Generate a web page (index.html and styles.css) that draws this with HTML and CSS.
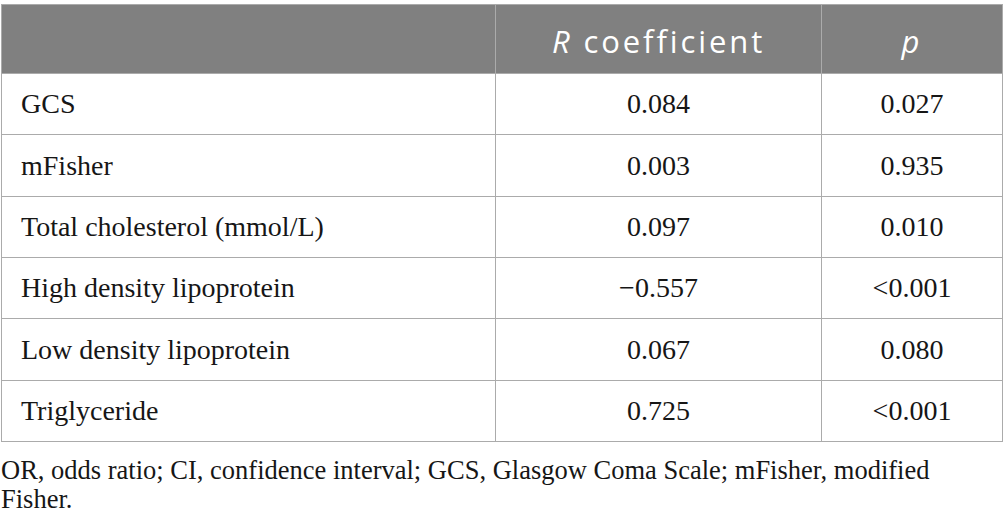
FILE: index.html
```html
<!DOCTYPE html>
<html>
<head>
<meta charset="utf-8">
<link rel="stylesheet" href="styles.css">
</head>
<body>
<div class="wrap">
<table class="data">
  <colgroup><col class="c1"><col class="c2"><col class="c3"></colgroup>
  <thead>
    <tr><th></th><th><i>R</i> coefficient</th><th><i>p</i></th></tr>
  </thead>
  <tbody>
    <tr><td>GCS</td><td>0.084</td><td>0.027</td></tr>
    <tr><td>mFisher</td><td>0.003</td><td>0.935</td></tr>
    <tr><td>Total cholesterol (mmol/L)</td><td>0.097</td><td>0.010</td></tr>
    <tr><td>High density lipoprotein</td><td>−0.557</td><td>&lt;0.001</td></tr>
    <tr><td>Low density lipoprotein</td><td>0.067</td><td>0.080</td></tr>
    <tr><td>Triglyceride</td><td>0.725</td><td>&lt;0.001</td></tr>
  </tbody>
</table>
<p class="note">OR, odds ratio; CI, confidence interval; GCS, Glasgow Coma Scale; mFisher, modified Fisher.</p>
</div>
</body>
</html>
```
FILE: styles.css
```css
html, body { margin: 0; padding: 0; background: #fff; }
.wrap { padding: 4px 2px 0 1px; width: 1001px; }
.data {
  border-collapse: collapse;
  width: 1001px;
  table-layout: fixed;
  font-family: "Liberation Serif", "Times New Roman", serif;
  font-size: 28px;
  color: #161616;
}
.c1 { width: 494px; }
.c2 { width: 326px; }
.c3 { width: 181px; }
.data th, .data td { border: 1px solid #ababab; }
.data th {
  background: #808080;
  color: #fff;
  font-family: "Open Sans", "Liberation Sans", sans-serif;
  font-weight: normal;
  font-size: 31px;
  letter-spacing: 2.9px;
  height: 64px;
  padding: 4px 0 0 0;
  vertical-align: middle;
  text-align: center;
}
.data td {
  height: 60.35px;
  padding: 0;
  text-align: center;
  vertical-align: middle;
}
.data td:first-child { text-align: left; padding-left: 19px; }
.note {
  margin: 14px 0 0 0;
  font-family: "Liberation Serif", "Times New Roman", serif;
  font-size: 26.5px;
  line-height: 29px;
  color: #161616;
  width: 960px;
}
```
